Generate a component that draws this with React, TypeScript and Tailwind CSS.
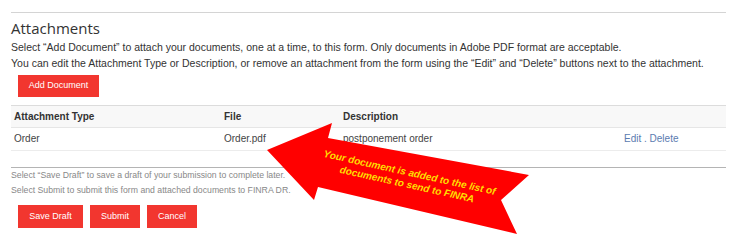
export default function App() {
  return (
    <div className="relative w-[743px] h-[245px] bg-white overflow-hidden font-['Liberation_Sans',Arial,sans-serif]">
      <div className="ml-[11px] w-[715px] pt-[12px]">
        <div className="border-t border-[#d4d4d4]" />

        {/* Heading + intro */}
        <h2 className="mt-[5px] text-[15px] leading-[20px] text-[#333] font-['Open_Sans',sans-serif]">
          Attachments
        </h2>
        <p className="mt-[1px] text-[10.5px] leading-[16px] text-[#333]">
          Select “Add Document” to attach your documents, one at a time, to this form. Only documents in Adobe PDF format are acceptable.
        </p>
        <p className="text-[10.5px] leading-[16px] text-[#333]">
          You can edit the Attachment Type or Description, or remove an attachment from the form using the “Edit” and “Delete” buttons next to the attachment.
        </p>

        <button className="mt-[2px] ml-[7px] h-[22px] w-[81px] bg-[#f2362f] text-white text-[9px]">
          Add Document
        </button>

        {/* Attachment table */}
        <div className="mt-[8px] border-t border-[#dcdcdc]">
          <div className="flex h-[22px] items-center bg-[#f8f8f8] border-b border-[#e6e6e6] text-[10px] font-bold text-[#333]">
            <div className="w-[213px] pl-[3px]">Attachment Type</div>
            <div className="w-[119px]">File</div>
            <div className="w-[281px]">Description</div>
            <div className="flex-1" />
          </div>
          <div className="flex h-[23px] items-center border-b border-[#ececec] text-[10px] text-[#444]">
            <div className="w-[213px] pl-[3px]">Order</div>
            <div className="w-[119px]">Order.pdf</div>
            <div className="w-[281px]">postponement order</div>
            <div className="flex-1 text-[#5b7bb0]">Edit . Delete</div>
          </div>
        </div>

        <div className="mt-[16px] border-t border-[#b4b4b4]" />
        <p className="text-[8.7px] leading-[15px] text-[#888]">
          Select “Save Draft” to save a draft of your submission to complete later.
        </p>
        <p className="text-[8.7px] leading-[15px] text-[#888]">
          Select Submit to submit this form and attached documents to FINRA DR.
        </p>

        <div className="mt-[7px] ml-[7px] flex gap-[7px]">
          <button className="h-[23px] w-[65px] bg-[#f2362f] text-white text-[9px]">Save Draft</button>
          <button className="h-[23px] w-[50px] bg-[#f2362f] text-white text-[9px]">Submit</button>
          <button className="h-[23px] w-[50px] bg-[#f2362f] text-white text-[9px]">Cancel</button>
        </div>
      </div>

      {/* Callout arrow over the page */}
      <svg className="absolute left-0 top-0 pointer-events-none" width="743" height="245" viewBox="0 0 743 245">
        <polygon
          points="267,150 332,123 328,138 529,175 501,200 517,234 318,187 314,200"
          fill="#ff0000"
        />
        <g transform="rotate(12.5 409 180)" fill="#ffdd00" fontFamily="Liberation Sans, Arial, sans-serif" fontWeight="bold" fontStyle="italic" fontSize="10" textAnchor="middle">
          <text x="408" y="176">Your document is added to the list of</text>
          <text x="408" y="188">documents to send to FINRA</text>
        </g>
      </svg>
    </div>
  )
}
